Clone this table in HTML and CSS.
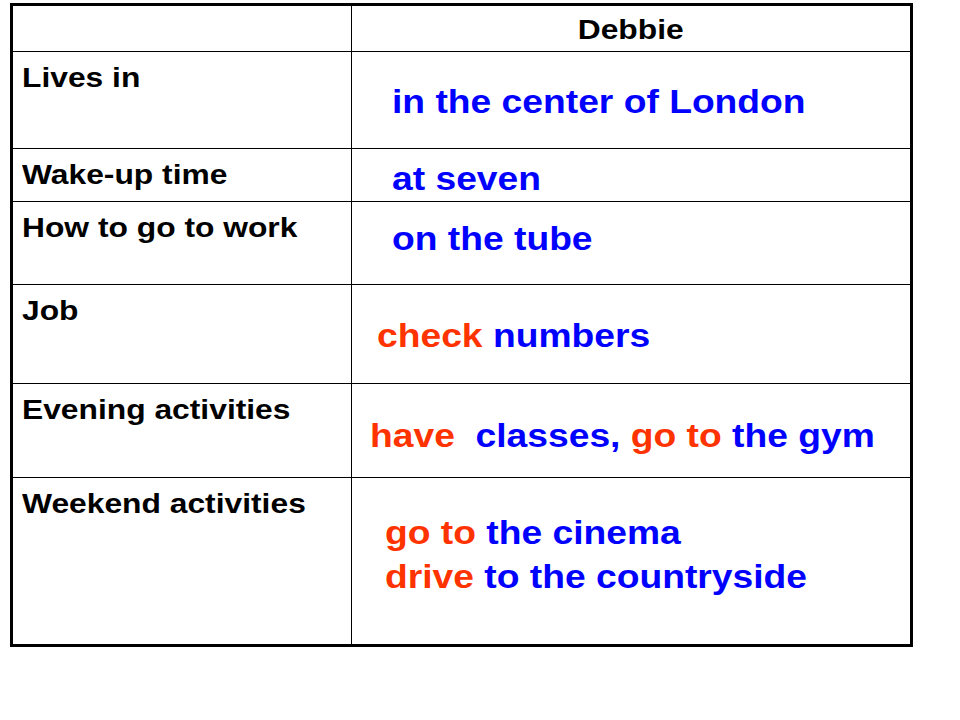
FILE: index.html
```html
<!DOCTYPE html>
<html lang="en">
<head>
<meta charset="utf-8">
<title>Debbie</title>
<link rel="stylesheet" href="styles.css">
</head>
<body>
<div class="sheet">
  <div class="cell"></div>
  <div class="cell head"><span class="wide center">Debbie</span></div>

  <div class="cell label"><span class="wide">Lives in</span></div>
  <div class="cell answer a-lives"><span class="big"><span class="blue">in the center of London</span></span></div>

  <div class="cell label"><span class="wide">Wake-up time</span></div>
  <div class="cell answer a-wake"><span class="big"><span class="blue">at seven</span></span></div>

  <div class="cell label"><span class="wide">How to go to work</span></div>
  <div class="cell answer a-how"><span class="big"><span class="blue">on the tube</span></span></div>

  <div class="cell label"><span class="wide">Job</span></div>
  <div class="cell answer a-job"><span class="big"><span class="red">check</span> <span class="blue">numbers</span></span></div>

  <div class="cell label"><span class="wide">Evening activities</span></div>
  <div class="cell answer a-evening"><span class="big"><span class="red">have</span>&nbsp; <span class="blue">classes,</span> <span class="red">go to</span> <span class="blue">the gym</span></span></div>

  <div class="cell label"><span class="wide">Weekend activities</span></div>
  <div class="cell answer a-weekend">
    <div class="line"><span class="big"><span class="red">go to</span> <span class="blue">the cinema</span></span></div>
    <div class="line"><span class="big"><span class="red">drive</span> <span class="blue">to the countryside</span></span></div>
  </div>
</div>
</body>
</html>
```

FILE: styles.css
```css
html, body {
  margin: 0;
  padding: 0;
  background: #ffffff;
}

body {
  padding: 3px 0 0 10px;
  font-family: "Liberation Sans", Arial, sans-serif;
  font-weight: bold;
  color: #000000;
}

.sheet {
  display: grid;
  grid-template-columns: 338px 558px;
  grid-template-rows: 45px 96px 52px 82px 98px 93px 166px;
  gap: 1px;
  width: max-content;
  background: #000000;
  border: 3px solid #000000;
}

.cell {
  background: #ffffff;
  white-space: nowrap;
}

.wide {
  display: inline-block;
  font-size: 28px;
  line-height: 32px;
  transform: scaleX(1.135);
  transform-origin: left center;
}

.wide.center {
  transform-origin: center center;
}

.head {
  text-align: center;
  padding-top: 8px;
}

.label {
  padding: 10px 0 0 9px;
}

.big {
  display: inline-block;
  font-size: 33px;
  line-height: 44px;
  transform: scaleX(1.128);
  transform-origin: left center;
  white-space: nowrap;
}

.blue { color: #0000ff; }
.red { color: #ff3300; }

.a-lives { padding: 28px 0 0 40px; }
.a-wake { padding: 8px 0 0 40px; }
.a-how { padding: 15px 0 0 40px; }
.a-job { padding: 29px 0 0 25px; }
.a-evening { padding: 30px 0 0 18px; }
.a-weekend { padding: 33px 0 0 33px; }

.line {
  height: 44px;
}
```
